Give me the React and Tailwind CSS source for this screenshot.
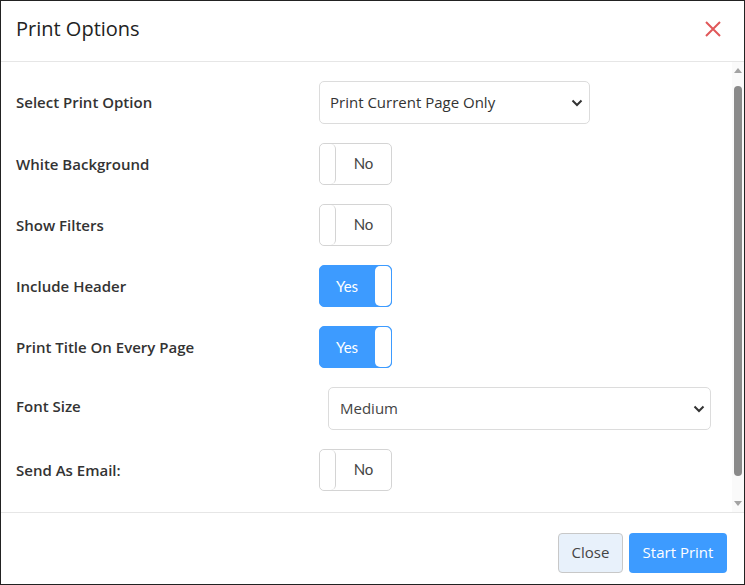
import React from "react";

const Chevron = () => (
  <svg width="12" height="8" viewBox="0 0 12 8" className="shrink-0">
    <path d="M1.5 1.5 L6 6 L10.5 1.5" fill="none" stroke="#333" strokeWidth="2" />
  </svg>
);

const Toggle = ({ on }) =>
  on ? (
    <div className="flex h-[42px] w-[73px] rounded-[5px] bg-[#3d9bff] border border-[#3d9bff]">
      <div className="flex flex-1 items-center justify-center pr-px font-['Lato'] text-[15px] text-white">
        Yes
      </div>
      <div className="w-[16px] rounded-[5px] bg-white" />
    </div>
  ) : (
    <div className="flex h-[42px] w-[73px] rounded-[5px] border border-[#d4d4d4] bg-white">
      <div className="w-[16px] rounded-[5px] border-r border-[#d4d4d4] bg-white" />
      <div className="flex flex-1 items-center justify-center pb-px font-['Lato'] text-[15px] text-[#444]">
        No
      </div>
    </div>
  );

const Row = ({ label, children, labelClass = "" }) => (
  <div className="flex items-center">
    <div className={`w-[303px] shrink-0 text-[15px] font-semibold text-[#333] ${labelClass}`}>{label}</div>
    {children}
  </div>
);

export default function App() {
  return (
    <div className="flex h-[585px] w-[745px] flex-col border border-[#222] bg-white font-['Open_Sans',sans-serif]">
      {/* Header */}
      <div className="flex h-[61px] shrink-0 items-center justify-between border-b border-[#e6e6e6] pb-[4px] pl-[15px] pr-[22px]">
        <h1 className="text-[20px] text-[#222]">Print Options</h1>
        <svg width="18" height="18" viewBox="0 0 18 18">
          <path d="M2 2 L16 16 M16 2 L2 16" stroke="#e0585a" strokeWidth="2" fill="none" />
        </svg>
      </div>

      {/* Body */}
      <div className="flex h-[450px] shrink-0">
        <div className="flex flex-1 flex-col gap-[19px] pl-[15px] pt-[19px]">
          <Row label="Select Print Option">
            <div className="flex h-[43px] w-[271px] items-center justify-between rounded-[5px] border border-[#dcdcdc] bg-white pl-[10px] pr-[6px] text-[15px] text-[#333]">
              <span>Print Current Page Only</span>
              <Chevron />
            </div>
          </Row>
          <Row label="White Background">
            <Toggle />
          </Row>
          <Row label="Show Filters">
            <Toggle />
          </Row>
          <Row label="Include Header">
            <Toggle on />
          </Row>
          <Row label="Print Title On Every Page">
            <Toggle on />
          </Row>
          <Row label="Font Size" labelClass="-mt-[5px]">
            <div className="ml-[9px] flex h-[43px] w-[383px] items-center justify-between rounded-[5px] border border-[#dcdcdc] bg-white pl-[11px] pr-[5px] text-[15px] text-[#444]">
              <span>Medium</span>
              <Chevron />
            </div>
          </Row>
          <Row label="Send As Email:">
            <Toggle />
          </Row>
        </div>

        {/* Scrollbar */}
        <div className="flex w-[12px] flex-col items-center bg-[#fafafa] py-[6px]">
          <svg width="8" height="5" viewBox="0 0 8 5" className="shrink-0">
            <path d="M0 5 L4 0 L8 5 Z" fill="#a3a3a3" />
          </svg>
          <div className="mt-[13px] h-[390px] w-[8px] rounded-full bg-[#8a8a8a]" />
          <div className="flex-1" />
          <svg width="8" height="5" viewBox="0 0 8 5" className="shrink-0">
            <path d="M0 0 L8 0 L4 5 Z" fill="#a3a3a3" />
          </svg>
        </div>
      </div>

      {/* Footer */}
      <div className="flex flex-1 items-center justify-end gap-[6px] border-t border-[#e6e6e6] pr-[17px] pt-[8px]">
        <button className="h-[40px] w-[65px] rounded-[4px] border border-[#c8c8c8] bg-[#e8f1fb] text-[15px] text-[#444]">
          Close
        </button>
        <button className="h-[40px] w-[98px] rounded-[4px] bg-[#3d9bff] text-[15px] text-white">
          Start Print
        </button>
      </div>
    </div>
  );
}
